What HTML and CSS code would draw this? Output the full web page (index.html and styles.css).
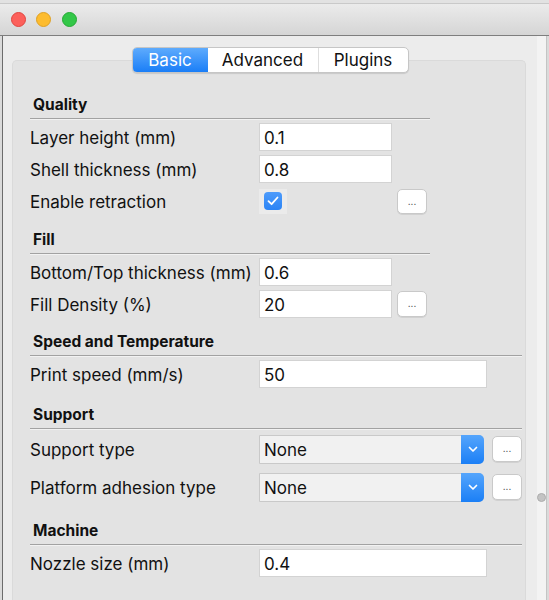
FILE: index.html
```html
<!DOCTYPE html>
<html>
<head>
<meta charset="utf-8">
<link rel="stylesheet" href="styles.css">
</head>
<body>
<div class="window">
  <div class="titlebar">
    <span class="light red"></span>
    <span class="light yellow"></span>
    <span class="light green"></span>
  </div>
  <div class="body">
    <div class="content">
      <div class="tabs">
        <div class="tab active t-basic">Basic</div>
        <div class="tab t-adv">Advanced</div>
        <div class="tab t-plug">Plugins</div>
      </div>
      <div class="panel">
        <div class="section narrow s-quality">
          <div class="sec-head">Quality</div>
          <div class="rows">
            <div class="row"><span class="label">Layer height (mm)</span><span class="input">0.1</span></div>
            <div class="row"><span class="label">Shell thickness (mm)</span><span class="input">0.8</span></div>
            <div class="row row-check"><span class="label">Enable retraction</span>
              <span class="check-wrap"><span class="check"><svg width="12" height="10" viewBox="0 0 12 10"><path d="M1.5 5.2 L4.6 8.2 L10.5 1.5" fill="none" stroke="#fff" stroke-width="1.8" stroke-linecap="round" stroke-linejoin="round"/></svg></span></span>
              <span class="more">...</span></div>
          </div>
        </div>
        <div class="section narrow s-fill">
          <div class="sec-head">Fill</div>
          <div class="rows">
            <div class="row"><span class="label">Bottom/Top thickness (mm)</span><span class="input">0.6</span></div>
            <div class="row"><span class="label">Fill Density (%)</span><span class="input">20</span><span class="more">...</span></div>
          </div>
        </div>
        <div class="section wide s-speed">
          <div class="sec-head">Speed and Temperature</div>
          <div class="rows">
            <div class="row"><span class="label">Print speed (mm/s)</span><span class="input long">50</span></div>
          </div>
        </div>
        <div class="section wide s-support">
          <div class="sec-head">Support</div>
          <div class="rows rows-sel">
            <div class="row row-sel"><span class="label">Support type</span>
              <span class="select"><span class="sel-text">None</span><span class="sel-arrow"><svg width="10" height="7" viewBox="0 0 10 7"><path d="M1.5 1.5 L5 5 L8.5 1.5" fill="none" stroke="#fff" stroke-width="1.7" stroke-linecap="round" stroke-linejoin="round"/></svg></span></span>
              <span class="more">...</span></div>
            <div class="row row-sel"><span class="label">Platform adhesion type</span>
              <span class="select"><span class="sel-text">None</span><span class="sel-arrow"><svg width="10" height="7" viewBox="0 0 10 7"><path d="M1.5 1.5 L5 5 L8.5 1.5" fill="none" stroke="#fff" stroke-width="1.7" stroke-linecap="round" stroke-linejoin="round"/></svg></span></span>
              <span class="more">...</span></div>
          </div>
        </div>
        <div class="section wide s-machine">
          <div class="sec-head">Machine</div>
          <div class="rows">
            <div class="row"><span class="label">Nozzle size (mm)</span><span class="input long">0.4</span></div>
          </div>
        </div>
      </div>
    </div>
    <div class="track"><span class="knob"></span></div>
  </div>
</div>
</body>
</html>
```

FILE: styles.css
```css
html, body {
  margin: 0;
  padding: 0;
}
body {
  width: 549px;
  height: 600px;
  overflow: hidden;
  background: #e2e2e2;
  font-family: Inter, "Liberation Sans", sans-serif;
  color: #111;
}
.window {
  height: 600px;
  box-sizing: border-box;
  padding-top: 3px;
  display: flex;
  flex-direction: column;
}
.titlebar {
  height: 31px;
  flex: none;
  border-top: 1px solid #c9c9c9;
  border-bottom: 1px solid #7e7e7e;
  background: linear-gradient(#ebebeb, #d5d5d5);
  display: flex;
  align-items: center;
  gap: 10.5px;
  padding-left: 10.5px;
}
.light {
  width: 15px;
  height: 15px;
  border-radius: 50%;
  box-sizing: border-box;
}
.red { background: #fc605b; border: 1px solid #e0443e; }
.yellow { background: #fdbc2f; border: 1px solid #dfa023; }
.green { background: #33c748; border: 1px solid #24aa33; }

.body {
  flex: 1;
  display: flex;
  padding-left: 2px;
  background: #dadada;
  min-height: 0;
}
.content {
  width: 535px;
  box-sizing: border-box;
  border-left: 1px solid #6c6c6c;
  background: #ececec;
  padding: 11px 11px 0 9px;
  display: flex;
  flex-direction: column;
}
.track {
  width: 9px;
  background: #f3f3f3;
  border-right: 1px solid #c4c4c4;
  position: relative;
}
.knob {
  position: absolute;
  left: 0;
  top: 457px;
  width: 9px;
  height: 9px;
  box-sizing: border-box;
  border-radius: 50%;
  background: #c3c3c3;
  border: 1px solid #adadad;
}

.tabs {
  position: relative;
  z-index: 1;
  align-self: center;
  margin-left: 2px;
  display: flex;
  height: 26px;
  box-sizing: border-box;
  border: 1px solid #c6c6c6;
  border-radius: 5px;
  background: #fff;
  overflow: hidden;
  box-shadow: 0 1px 1px rgba(0,0,0,0.12);
  font-size: 17px;
}
.tab {
  display: flex;
  align-items: center;
  justify-content: center;
  color: #111;
}
.t-basic { width: 75px; }
.t-adv { width: 110px; border-right: 1px solid #dedede; }
.t-plug { width: 89px; }
.tab.active {
  background: linear-gradient(#5eabfd, #1a7ef7);
  color: #fff;
}

.panel {
  flex: 1;
  margin-top: -13px;
  background: #e3e3e3;
  border: 1px solid #dadada;
  border-bottom: none;
  border-radius: 5px 5px 0 0;
  padding: 34px 4px 0 17px;
}
.section.narrow { width: 400px; }
.section.wide { width: 492px; }
.s-fill { margin-top: 16px; }
.s-speed { margin-top: 14px; }
.s-support { margin-top: 17px; }
.s-machine { margin-top: 19px; }

.sec-head {
  height: 20px;
  line-height: 20px;
  padding: 0 0 3px 3px;
  font-size: 15.5px;
  font-weight: 700;
  border-bottom: 1px solid #a2a2a2;
  box-shadow: 0 1px 0 #f2f2f2;
}
.rows {
  margin-top: 4px;
  display: flex;
  flex-direction: column;
  gap: 4px;
}
.rows-sel {
  margin-top: 5px;
  gap: 8px;
}
.row {
  display: grid;
  grid-template-columns: 224px 133px 30px;
  column-gap: 5px;
  align-items: center;
  height: 28px;
}
.row-check {
  height: 26px;
  margin-top: 1px;
}
.row-sel {
  height: 30px;
  grid-template-columns: 221px 225px 30px;
  column-gap: 8px;
}
.label {
  font-size: 17px;
  white-space: nowrap;
  padding-top: 2px;
}
.input {
  box-sizing: border-box;
  height: 28px;
  background: #fff;
  border: 1px solid #d3d3d3;
  font-size: 17px;
  line-height: 28px;
  padding-left: 4px;
}
.input.long {
  width: 228px;
}
.check-wrap {
  width: 28px;
  height: 25px;
  background: #ebebeb;
  display: flex;
  align-items: center;
  justify-content: center;
}
.check {
  width: 18px;
  height: 18px;
  border-radius: 4px;
  background: linear-gradient(#4d9bfb, #2c84f5);
  display: flex;
  align-items: center;
  justify-content: center;
}
.more {
  box-sizing: border-box;
  width: 30px;
  height: 26px;
  background: #fff;
  border: 1px solid #c9c9c9;
  border-radius: 5px;
  box-shadow: 0 1px 0 rgba(0,0,0,0.08);
  font-size: 10px;
  line-height: 22px;
  text-align: center;
  color: #444;
}
.row-check .more {
  height: 25px;
}
.select {
  box-sizing: border-box;
  height: 29px;
  display: flex;
  background: #f1f1f1;
  border: 1px solid #c9c9c9;
  border-radius: 0 5px 5px 0;
}
.sel-text {
  flex: 1;
  font-size: 17px;
  line-height: 29px;
  padding-left: 4px;
}
.sel-arrow {
  width: 23px;
  margin: -1px -1px -1px 0;
  border-radius: 0 5px 5px 0;
  background: linear-gradient(#55a5fc, #1b7ff6);
  display: flex;
  align-items: center;
  justify-content: center;
}
```
